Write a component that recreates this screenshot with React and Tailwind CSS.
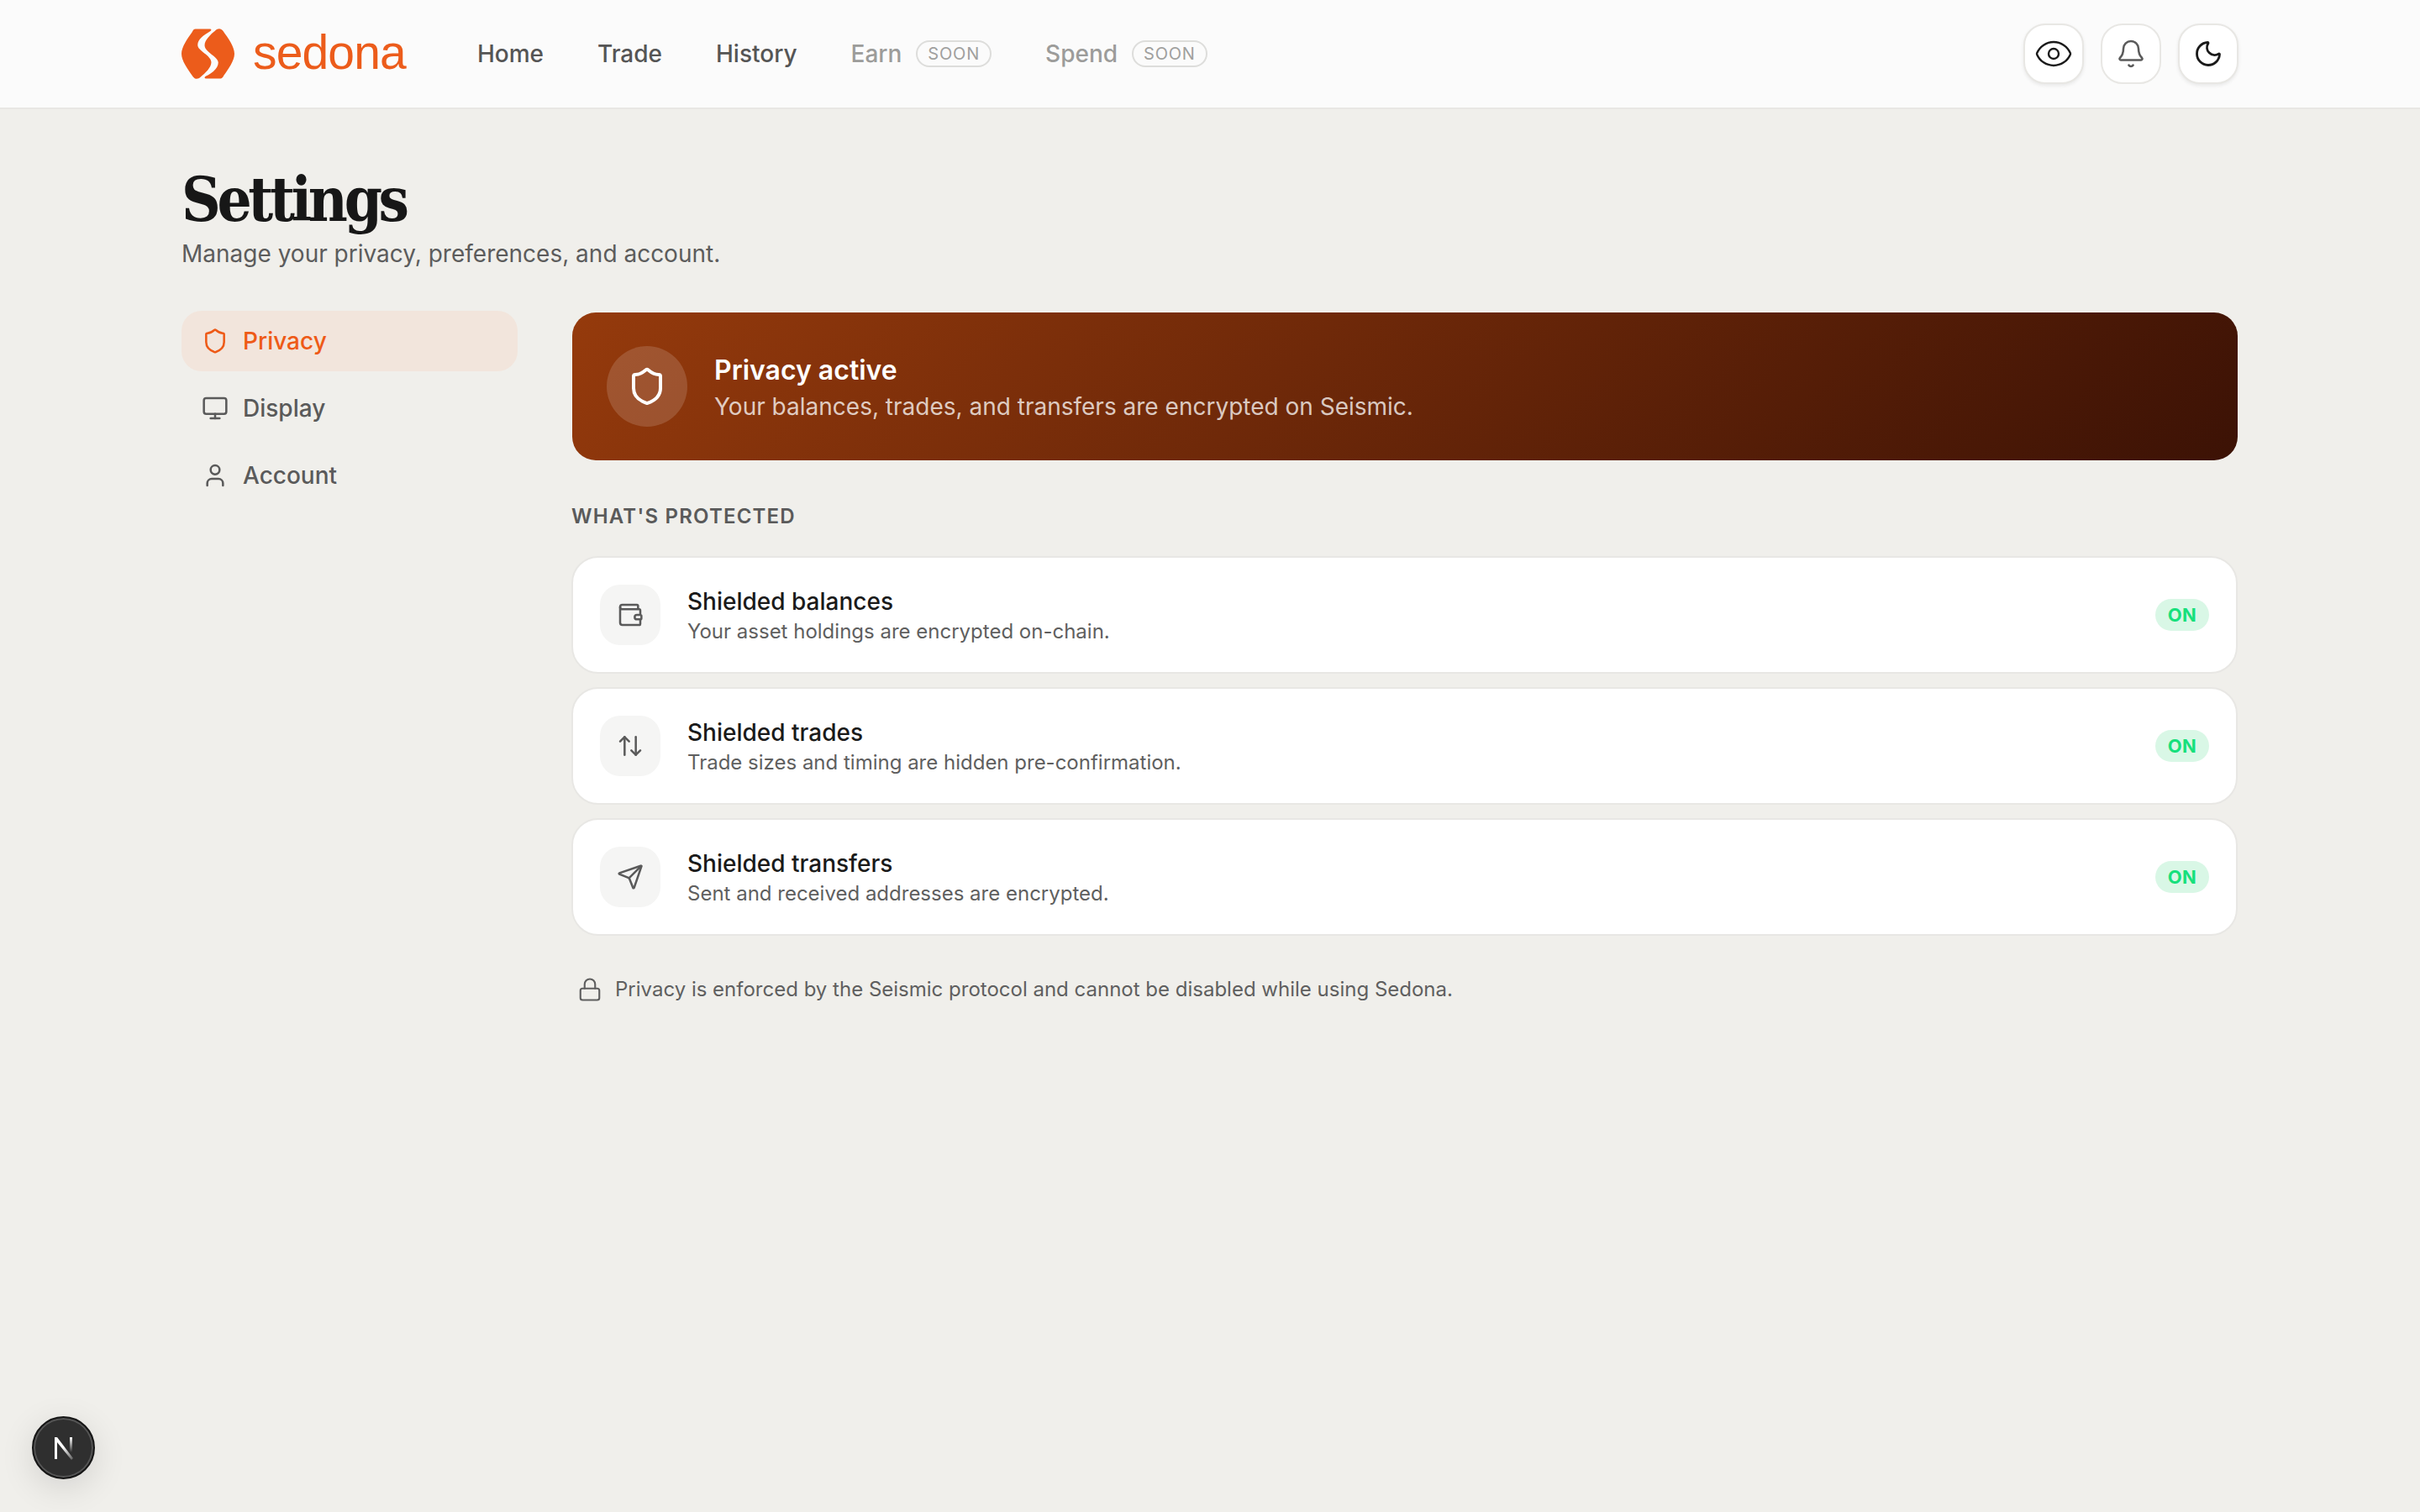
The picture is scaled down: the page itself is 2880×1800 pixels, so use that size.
import { ArrowUpDown, Bell, Eye, Lock, Monitor, Moon, Send, Shield, User, Wallet } from "lucide-react";

const navLinks = [
  { label: "Home" },
  { label: "Trade" },
  { label: "History" },
  { label: "Earn", soon: true },
  { label: "Spend", soon: true },
];

const sideItems = [
  { label: "Privacy", icon: Shield, active: true },
  { label: "Display", icon: Monitor },
  { label: "Account", icon: User },
];

const protectedRows = [
  { title: "Shielded balances", text: "Your asset holdings are encrypted on-chain.", icon: Wallet },
  { title: "Shielded trades", text: "Trade sizes and timing are hidden pre-confirmation.", icon: ArrowUpDown },
  { title: "Shielded transfers", text: "Sent and received addresses are encrypted.", icon: Send },
];

const logoHalf =
  "M128 71H178C186 71 187 75 181 79C158 92 136 107 136 128C136 150 185 165 185 190C185 210 162 230 147 243C138 252 126 252 119 242C100 215 78 185 78 160C78 135 100 105 116 82C120 74 123 71 128 71Z";

const Logo = () => (
  <div className="flex items-center gap-[22px]">
    <svg width="63" height="60" viewBox="78 70 190 180" fill="#ec5c1b">
      <path d={logoHalf} />
      <path d={logoHalf} transform="rotate(180 173 160)" />
    </svg>
    <span className="mt-[-4px] [font-family:'Liberation_Sans',sans-serif] text-[57px] leading-none tracking-[-0.015em] text-[#ec5c1b]">
      sedona
    </span>
  </div>
);

const NextBadge = () => (
  <div className="absolute left-[38px] top-[1686px] flex h-[75px] w-[75px] items-center justify-center rounded-full border-2 border-[#161616] bg-[#2f2f2f] shadow-[0_10px_40px_rgba(0,0,0,0.12),inset_0_0_0_2px_#555]">
    <svg width="30" height="30" viewBox="0 0 30 30" fill="none">
      <defs>
        <linearGradient id="n-fade" x1="0" y1="0" x2="0" y2="1">
          <stop offset="0" stopColor="#fff" />
          <stop offset="1" stopColor="#fff" stopOpacity="0" />
        </linearGradient>
        <linearGradient id="n-diag" gradientUnits="userSpaceOnUse" x1="14" y1="14" x2="26" y2="29">
          <stop offset="0" stopColor="#fff" />
          <stop offset="1" stopColor="#fff" stopOpacity="0.2" />
        </linearGradient>
      </defs>
      <path d="M4 2V28H7V8L24 29L26 27L7 2Z" fill="url(#n-diag)" />
      <path d="M4 2H7V28H4Z" fill="#fff" />
      <rect x="22" y="2" width="3" height="18" fill="url(#n-fade)" />
    </svg>
  </div>
);

export default function App() {
  return (
    <div className="relative min-h-screen bg-[#f0efeb] [font-family:Inter,sans-serif] text-[#1a1a1a]">
      <header className="h-[130px] border-b-2 border-[#e8e7e4] bg-[#fbfbfb]">
        <div className="mx-auto flex h-full w-[2448px] items-center justify-between">
          <div className="flex items-center gap-[85px]">
            <Logo />
            <nav className="flex items-center gap-16 text-[28px] font-medium">
              {navLinks.map(({ label, soon }) =>
                soon ? (
                  <div key={label} className="flex items-center gap-[17px] text-[#9c9c9a]">
                    {label}
                    <span className="flex h-8 items-center rounded-full border-2 border-[#dddddb] px-[12px] text-[20px] font-normal tracking-[0.04em] text-[#a0a09e]">
                      SOON
                    </span>
                  </div>
                ) : (
                  <a key={label} className="text-[#555]">
                    {label}
                  </a>
                )
              )}
            </nav>
          </div>
          <div className="flex items-center gap-5">
            <button className="flex h-[72px] w-[72px] items-center justify-center rounded-[26px] border-2 border-[#e8e7e4] bg-white shadow-[0_2px_4px_rgba(0,0,0,0.08)]">
              <Eye size={48} strokeWidth={1.2} color="#1a1a1a" />
            </button>
            <button className="flex h-[72px] w-[72px] items-center justify-center rounded-[26px] border-2 border-[#e8e7e4] bg-white">
              <Bell size={36} strokeWidth={1.7} color="#5a5a5a" />
            </button>
            <button className="flex h-[72px] w-[72px] items-center justify-center rounded-[26px] border-2 border-[#e8e7e4] bg-white shadow-[0_2px_4px_rgba(0,0,0,0.08)]">
              <Moon size={36} strokeWidth={1.9} color="#1a1a1a" />
            </button>
          </div>
        </div>
      </header>

      <main className="mx-auto w-[2448px] pt-[66px]">
        <h1 className="[font-family:'DejaVu_Serif_Condensed','DejaVu_Serif',serif] text-[72px] font-bold leading-[84px] tracking-[-0.06em] text-[#171717]">
          Settings
        </h1>
        <p className="mt-[2px] text-[28px] leading-[40px] text-[#5c5c5c]">
          Manage your privacy, preferences, and account.
        </p>

        <div className="mt-[48px] flex gap-[64px] pr-px">
          <aside className="flex w-[400px] flex-col gap-2">
            {sideItems.map(({ label, icon: Icon, active }) => (
              <a
                key={label}
                className={
                  active
                    ? "flex h-[72px] items-center gap-[17px] rounded-[24px] bg-[#f2e5dc] px-6 text-[28px] font-medium text-[#ee5a17]"
                    : "flex h-[72px] items-center gap-[17px] rounded-[24px] px-6 text-[28px] font-medium text-[#5a5a5a]"
                }
              >
                <Icon size={32} strokeWidth={1.9} />
                {label}
              </a>
            ))}
          </aside>

          <section className="min-w-0 flex-1">
            <div className="mt-[2px] ml-px flex h-[176px] items-center gap-8 rounded-[28px] bg-[linear-gradient(135deg,#953a0c,#3c1205)] pl-[41px]">
              <div className="flex h-24 w-24 items-center justify-center rounded-full bg-white/15">
                <Shield size={48} color="#fff" />
              </div>
              <div className="pt-[3px]">
                <p className="text-[32px] font-semibold leading-[44px] text-white">Privacy active</p>
                <p className="text-[28px] leading-[42px] text-white/75">
                  Your balances, trades, and transfers are encrypted on Seismic.
                </p>
              </div>
            </div>

            <h2 className="mt-[51px] text-[24px] font-semibold leading-[32px] tracking-[0.05em] text-[#5a5a5a]">
              WHAT'S PROTECTED
            </h2>

            <div className="mt-[31px] flex flex-col gap-4">
              {protectedRows.map(({ title, text, icon: Icon }) => (
                <div
                  key={title}
                  className="flex h-[140px] items-center justify-between rounded-[32px] border-2 border-[#e8e7e4] bg-white px-8"
                >
                  <div className="flex items-center gap-8">
                    <div className="flex h-[72px] w-[72px] items-center justify-center rounded-[24px] bg-[#f5f5f4] text-[#5a5a5a]">
                      <Icon size={32} strokeWidth={1.9} />
                    </div>
                    <div className="pt-[2px]">
                      <p className="text-[28px] font-medium leading-[38px] text-[#1a1a1a]">{title}</p>
                      <p className="text-[24px] leading-[34px] text-[#5f5f5f]">{text}</p>
                    </div>
                  </div>
                  <span className="flex h-[38px] w-16 items-center justify-center rounded-full bg-[#d9f7e6] text-[22px] font-bold tracking-[0.02em] text-[#17e07c]">
                    ON
                  </span>
                </div>
              ))}
            </div>

            <div className="mt-[46px] flex items-center gap-[15px] pl-[7px] text-[24px] leading-[36px] text-[#5f5f5f]">
              <Lock size={30} strokeWidth={1.7} />
              Privacy is enforced by the Seismic protocol and cannot be disabled while using Sedona.
            </div>
          </section>
        </div>
      </main>

      <NextBadge />
    </div>
  );
}
